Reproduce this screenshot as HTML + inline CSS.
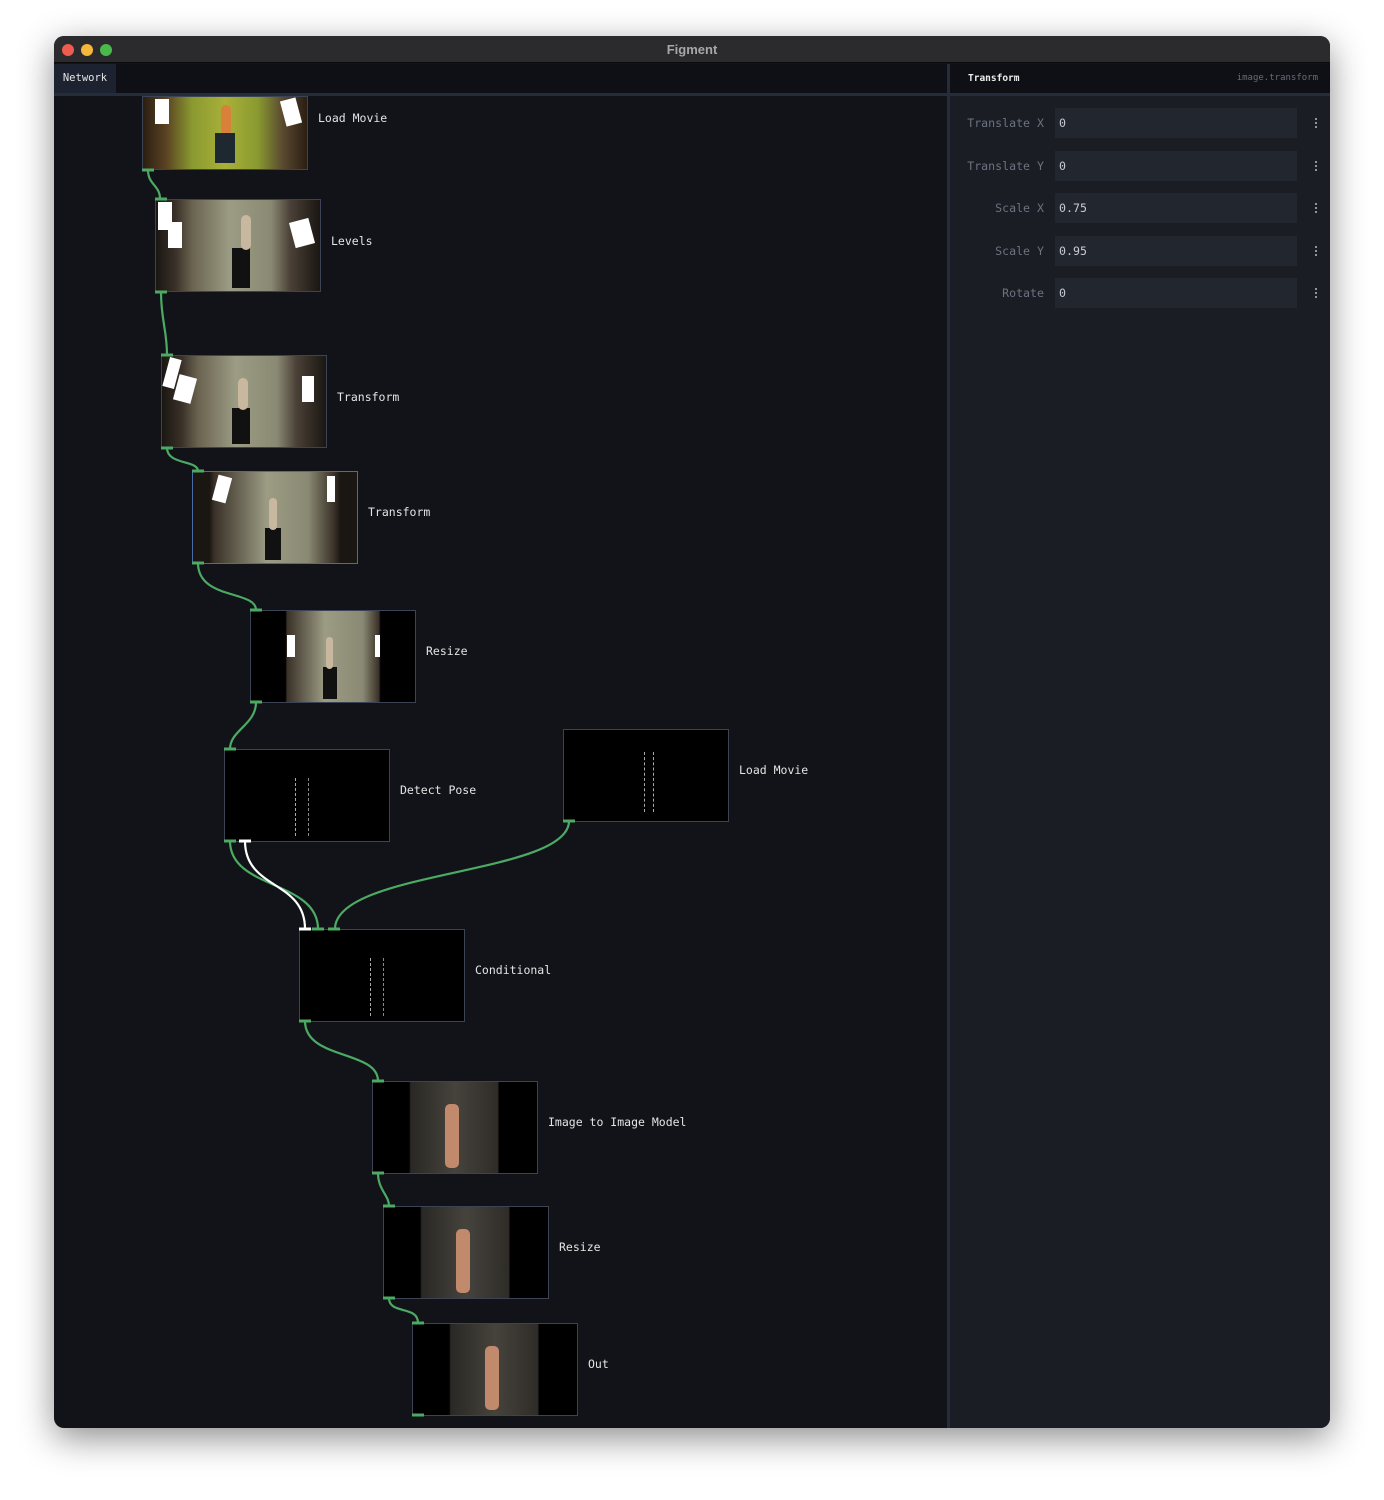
<!DOCTYPE html>
<html><head><meta charset="utf-8"><style>
*{margin:0;padding:0;box-sizing:border-box}
body{width:1384px;height:1500px;background:#fff;position:relative;overflow:hidden;font-family:"DejaVu Sans Mono","Liberation Mono",monospace}
.win{position:absolute;left:54px;top:36px;width:1276px;height:1392px;border-radius:10px;overflow:hidden;background:#111318;box-shadow:0 10px 35px rgba(0,0,0,.45)}
.title{position:absolute;left:0;top:0;width:100%;height:27px;background:#2b2b2d;border-bottom:1px solid #0a0a0a;color:#a8a8a8;font:bold 13px "Liberation Sans",sans-serif;text-align:center;line-height:27px}
.dot{position:absolute;top:8px;width:12px;height:12px;border-radius:50%}
.tabbar{position:absolute;left:0;top:28px;width:893px;height:29px;background:#0e1015}
.tab{position:absolute;left:0;top:0;width:62px;height:29px;background:#1c2230;color:#e6e6e6;font-size:10.5px;line-height:28px;text-align:center}
.sep{position:absolute;left:0;top:57px;width:1276px;height:3px;background:#262d3a}
.vsep{position:absolute;left:893px;top:28px;width:3px;height:1364px;background:#262d3a}
.panel{position:absolute;left:896px;top:60px;width:380px;height:1332px;background:#1a1d24}
.phead{position:absolute;left:896px;top:28px;width:380px;height:29px;background:#0e1015}
.row{position:absolute;left:0;width:380px;height:30px}
.row .l{position:absolute;right:286px;top:0;line-height:30px;color:#6b7280;font-size:11.6px}
.row .f{position:absolute;left:105px;top:0;width:242px;height:30px;background:#22262f;color:#c9ccd2;font-size:11.6px;line-height:30px;padding-left:4px}
.row .m{position:absolute;left:365px;top:9px;width:2px;height:12px;background:radial-gradient(circle,#9aa0aa 1px,transparent 1.2px) 0 0/2px 4px}
.node{position:absolute;width:166px;height:93px;border:1.5px solid #3b4354;background:#000;overflow:hidden}
.lbl{position:absolute;color:#e4e4e4;font-size:11.5px}
.stage{background:linear-gradient(90deg,#1a1612 0,#3a3128 12%,#6a6350 22%,#9c9c84 45%,#8a8a74 70%,#4a4036 82%,#1a1612 100%)}
.ai{background:linear-gradient(90deg,#000 0,#000 22%,#2a2824 23%,#46433d 50%,#2f2c28 76%,#000 77%,#000 100%)}
.fig{position:absolute;width:10px;height:45px;background:#c28a6c;border-radius:5px}
.wr{position:absolute;background:#fff}
</style></head><body>
<div class="win">
 <div class="title">Figment
  <div class="dot" style="left:8px;background:#ee5b50"></div>
  <div class="dot" style="left:27px;background:#f4b83a"></div>
  <div class="dot" style="left:46px;background:#48b94a"></div>
 </div>
 <div class="tabbar"><div class="tab">Network</div></div>
 <div class="phead"><span style="position:absolute;left:18px;top:9px;color:#eee;font-size:9.5px;font-weight:bold">Transform</span><span style="position:absolute;right:12px;top:9px;color:#666c78;font-size:9px">image.transform</span></div>
 <div class="sep"></div>
 <div class="panel">
  <div class="row" style="top:12px"><span class="l">Translate X</span><div class="f">0</div><div class="m"></div></div>
  <div class="row" style="top:55px"><span class="l">Translate Y</span><div class="f">0</div><div class="m"></div></div>
  <div class="row" style="top:97px"><span class="l">Scale X</span><div class="f">0.75</div><div class="m"></div></div>
  <div class="row" style="top:140px"><span class="l">Scale Y</span><div class="f">0.95</div><div class="m"></div></div>
  <div class="row" style="top:182px"><span class="l">Rotate</span><div class="f">0</div><div class="m"></div></div>
 </div>
 <div class="vsep"></div>
</div>

<div class="node" style="left:142px;top:96px;height:74px;background:linear-gradient(90deg,#2a1e12 0,#5a4222 14%,#8a9a30 30%,#a8b038 50%,#8a9a30 70%,#5a4a30 85%,#2a1e12 100%)">
 <div class="wr" style="left:12px;top:2px;width:14px;height:25px"></div><div class="wr" style="left:140px;top:2px;width:16px;height:26px;transform:rotate(-15deg)"></div>
 <div class="fig" style="left:78px;top:8px;background:#d9803a;height:30px"></div><div style="position:absolute;left:72px;top:36px;width:20px;height:30px;background:#1e2830"></div></div>
<div class="lbl" style="left:318px;top:111px">Load Movie</div>

<div class="node stage" style="left:155px;top:199px"><div class="wr" style="left:12px;top:22px;width:14px;height:26px"></div><div class="wr" style="left:2px;top:2px;width:14px;height:28px"></div><div class="wr" style="left:136px;top:20px;width:20px;height:26px;transform:rotate(-15deg)"></div><div style="position:absolute;left:76px;top:48px;width:18px;height:40px;background:#111"></div><div class="fig" style="left:85px;top:15px;height:35px;background:#c8b8a0"></div></div>
<div class="lbl" style="left:331px;top:234px">Levels</div>

<div class="node stage" style="left:161px;top:355px"><div class="wr" style="left:14px;top:20px;width:18px;height:26px;transform:rotate(15deg)"></div><div class="wr" style="left:4px;top:2px;width:12px;height:30px;transform:rotate(15deg)"></div><div class="wr" style="left:140px;top:20px;width:12px;height:26px"></div><div style="position:absolute;left:70px;top:52px;width:18px;height:36px;background:#111"></div><div class="fig" style="left:76px;top:22px;height:32px;background:#c8b8a0"></div></div>
<div class="lbl" style="left:337px;top:390px">Transform</div>

<div class="node" style="left:192px;top:471px;border-color:#4a6aa8;background:linear-gradient(90deg,#1a1612 0,#1a1612 10%,#3a3128 13%,#9c9c84 45%,#8a8a74 70%,#3a3128 86%,#1a1612 90%)"><div class="wr" style="left:22px;top:4px;width:14px;height:26px;transform:rotate(15deg)"></div><div class="wr" style="left:134px;top:4px;width:8px;height:26px"></div><div style="position:absolute;left:72px;top:56px;width:16px;height:32px;background:#111"></div><div class="fig" style="left:76px;top:26px;height:32px;background:#c8b8a0;width:8px"></div></div>
<div class="lbl" style="left:368px;top:505px">Transform</div>

<div class="node" style="left:250px;top:610px;background:linear-gradient(90deg,#000 0,#000 21%,#3a3128 22%,#9c9c84 45%,#8a8a74 68%,#3a3128 78%,#000 79%)"><div class="wr" style="left:36px;top:24px;width:8px;height:22px"></div><div class="wr" style="left:124px;top:24px;width:5px;height:22px"></div><div style="position:absolute;left:72px;top:56px;width:14px;height:32px;background:#111"></div><div class="fig" style="left:75px;top:26px;height:32px;background:#c8b8a0;width:7px"></div></div>
<div class="lbl" style="left:426px;top:644px">Resize</div>

<div class="node" style="left:224px;top:749px"><div style="position:absolute;left:70px;top:28px;width:14px;height:58px;border-left:1px dashed #aaa;border-right:1px dashed #888"></div></div>
<div class="lbl" style="left:400px;top:783px">Detect Pose</div>

<div class="node" style="left:563px;top:729px"><div style="position:absolute;left:80px;top:22px;width:10px;height:60px;border-left:1px dashed #aaa;border-right:1px dashed #aaa"></div></div>
<div class="lbl" style="left:739px;top:763px">Load Movie</div>

<div class="node" style="left:299px;top:929px"><div style="position:absolute;left:70px;top:28px;width:14px;height:58px;border-left:1px dashed #aaa;border-right:1px dashed #888"></div></div>
<div class="lbl" style="left:475px;top:963px">Conditional</div>

<div class="node ai" style="left:372px;top:1081px"><div class="fig" style="left:72px;top:22px;height:64px;width:14px"></div></div>
<div class="lbl" style="left:548px;top:1115px">Image to Image Model</div>

<div class="node ai" style="left:383px;top:1206px"><div class="fig" style="left:72px;top:22px;height:64px;width:14px"></div></div>
<div class="lbl" style="left:559px;top:1240px">Resize</div>

<div class="node ai" style="left:412px;top:1323px"><div class="fig" style="left:72px;top:22px;height:64px;width:14px"></div></div>
<div class="lbl" style="left:588px;top:1357px">Out</div>

<svg width="1384" height="1500" style="position:absolute;left:0;top:0" fill="none" stroke-width="2.2">
<g stroke="#4caa64">
<path d="M148 170 C148 185 160 185 160 199"/>
<path d="M161 292 C161 320 167 330 167 355"/>
<path d="M167 448 C167 465 198 460 198 471"/>
<path d="M198 563 C198 600 256 590 256 610"/>
<path d="M256 702 C256 725 230 730 230 749"/>
<path d="M230 841 C230 890 318 880 318 929"/>
<path d="M569 821 C569 875 335 870 335 929"/>
<path d="M305 1021 C305 1060 378 1050 378 1081"/>
<path d="M378 1173 C378 1190 389 1195 389 1206"/>
<path d="M389 1298 C389 1315 418 1305 418 1323"/>
</g>
<path d="M245 841 C245 890 305 880 305 929" stroke="#fff"/>
<g stroke="#4caa64" stroke-width="3">
<path d="M142 170h12M155 199h12M155 292h12M161 355h12M161 448h12M192 471h12M192 563h12M250 610h12M250 702h12M224 749h12M224 841h12M563 821h12M312 929h12M328 929h12M299 1021h12M372 1081h12M372 1173h12M383 1206h12M383 1298h12M412 1323h12M412 1415h12"/>
</g>
<path d="M239 841h12M299 929h12" stroke="#fff" stroke-width="3"/>
</svg>
</body></html>
